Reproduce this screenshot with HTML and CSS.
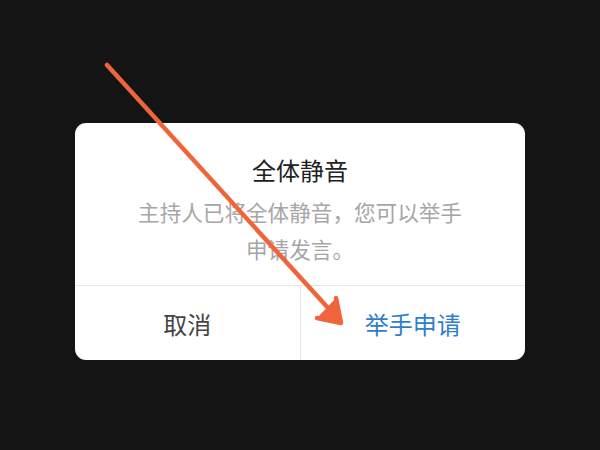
FILE: index.html
```html
<!DOCTYPE html>
<html lang="zh-CN">
<head>
<meta charset="utf-8">
<link rel="stylesheet" href="styles.css">
</head>
<body>
<div class="screen">
  <div class="dialog">
    <div class="content">
      <div class="title">全体静音</div>
      <div class="message">主持人已将全体静音，您可以举手申请发言。</div>
    </div>
    <div class="actions">
      <div class="btn cancel">取消</div>
      <div class="btn confirm">举手申请</div>
    </div>
  </div>
  <svg class="arrow" width="600" height="450" viewBox="0 0 600 450">
    <line x1="107" y1="65" x2="339" y2="320" stroke="#f0643c" stroke-width="4.5" stroke-linecap="round"/>
    <polyline points="336,298 341,323 317,318" fill="#f0643c" stroke="#f0643c" stroke-width="4.5" stroke-linejoin="round" stroke-linecap="round"/>
  </svg>
</div>
</body>
</html>
```
FILE: styles.css
```css
html, body {
  margin: 0;
  padding: 0;
  background: #141414;
}
.screen {
  position: relative;
  width: 600px;
  height: 450px;
  overflow: hidden;
  font-family: "Noto Sans CJK SC", "Noto Sans", sans-serif;
}
.dialog {
  position: relative;
  top: 123px;
  margin-left: 75px;
  width: 450px;
  height: 237px;
  background: #ffffff;
  border-radius: 11px;
  display: flex;
  flex-direction: column;
  overflow: hidden;
}
.content {
  padding: 30px 56px 18px;
  text-align: center;
  border-bottom: 1px solid #e6e6e6;
}
.title {
  font-size: 24px;
  line-height: 33px;
  color: #222222;
}
.message {
  margin-top: 7px;
  font-size: 21.6px;
  line-height: 37px;
  color: #a6a6a6;
}
.actions {
  flex: 1;
  display: flex;
}
.btn {
  flex: 1;
  display: flex;
  align-items: center;
  justify-content: center;
  font-size: 24px;
}
.cancel {
  color: #444444;
  border-right: 1px solid #e6e6e6;
}
.confirm {
  color: #2f7dcf;
}
.arrow {
  position: absolute;
  left: 0;
  top: 0;
  pointer-events: none;
}
```
